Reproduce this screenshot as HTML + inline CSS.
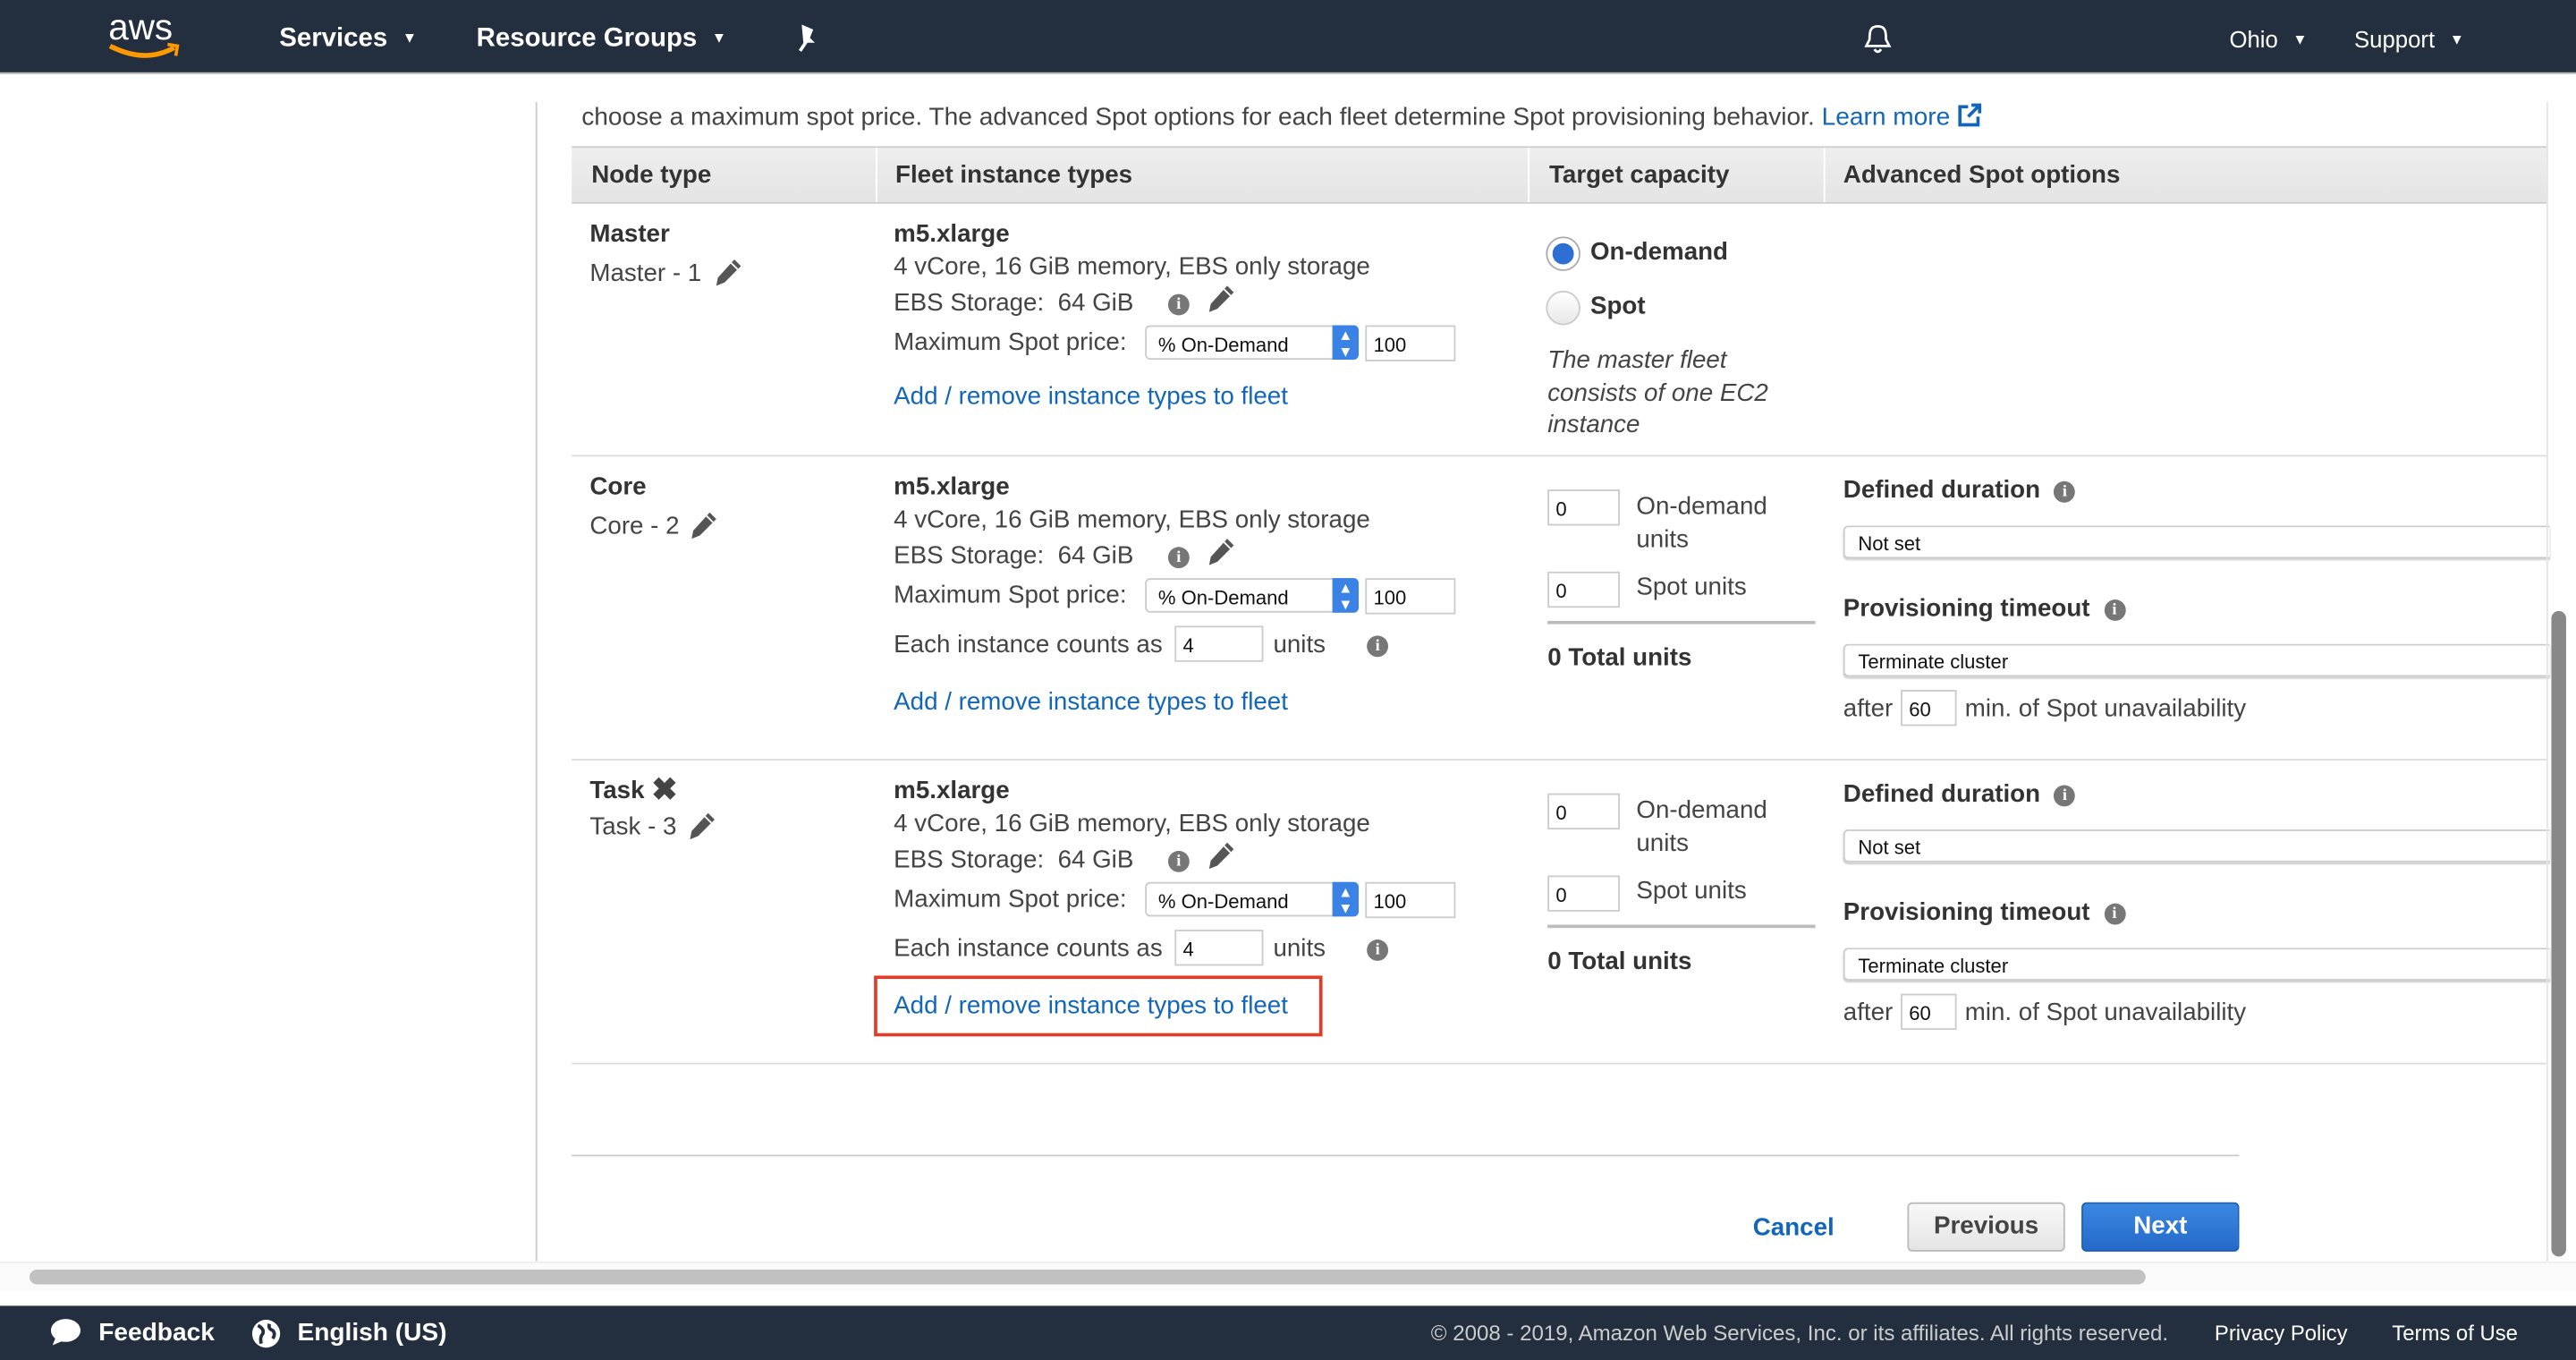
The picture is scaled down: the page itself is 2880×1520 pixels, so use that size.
<!DOCTYPE html>
<html><head><meta charset="utf-8"><style>
*{margin:0;padding:0;box-sizing:border-box}
html,body{width:2880px;height:1520px;overflow:hidden;background:#fff}
#w{position:absolute;left:0;top:0;width:1568px;height:828px;transform:scale(1.83673,1.83575);transform-origin:0 0;font-family:"Liberation Sans",sans-serif;color:#444;font-size:15.1px}
.a{position:absolute;white-space:nowrap}
.b{font-weight:bold;color:#333}
.l{color:#1166bb}
.top{position:absolute;left:0;top:0;width:1568px;height:45px;background:#232f3e;border-bottom:1px solid #bbb}
.top .a{color:#fff;font-weight:bold;font-size:16px;top:15px}
.car{font-size:9px;margin-left:9px;vertical-align:2px}
.hl{position:absolute;height:1px;background:#ddd}
.inp{position:absolute;border:1px solid #ccc;background:#fff;font-size:12px;color:#111;padding:4px 0 0 4px;height:22px}
.sel{position:absolute;border:1px solid #ccc;background:#fff;font-size:12px;color:#111;padding:4px 0 0 7px;height:21px;border-radius:3px;width:130px}
.sel i{position:absolute;right:-1px;top:-1px;width:16px;height:21px;background:#3b82e6;border-radius:0 3px 3px 0;color:#fff;font-style:normal;font-size:9px;text-align:center;line-height:10px;padding-top:1px}
.wide{position:absolute;left:1122px;width:430px;height:20px;border:1px solid #ccc;border-right:none;border-radius:3px 0 0 3px;font-size:12px;color:#111;padding:3px 0 0 8px;box-shadow:0 1px 1px #ccc}
.info{display:inline-block;width:13px;height:13px;border-radius:50%;background:#777;color:#fff;font-size:10px;font-weight:bold;text-align:center;line-height:13px;font-family:"Liberation Serif",serif;vertical-align:1px}
.pen{position:absolute}
</style></head><body><div id="w">
<svg width="0" height="0" style="position:absolute"><defs><g id="pen"><path d="M12 1 L16 5 L6 15 L1 17 L2 12 Z" fill="#555"/><path d="M10 3 L14 7" stroke="#fff" stroke-width="1"/></g></defs></svg>
<div class="top">
<div class="a" style="left:66px;top:4px;font-size:22px;font-weight:normal;color:#fff">aws</div>
<svg class="a" style="left:64px;top:25px" width="48" height="12"><path d="M3 3 Q24 14 42 4" stroke="#f90" stroke-width="3" fill="none"/><path d="M38 2 L44 3 L43 9" stroke="#f90" stroke-width="2" fill="none"/></svg>
<div class="a" style="left:170px">Services<span class="car">▼</span></div>
<div class="a" style="left:290px">Resource Groups<span class="car">▼</span></div>
<svg class="a" style="left:483px;top:14px" width="16" height="18"><path d="M5 1 L12 4 L10 9 L13 12 L6 12 Z" fill="#fff"/><path d="M8 11 L4 17" stroke="#fff" stroke-width="2"/></svg>
<svg class="a" style="left:1134px;top:14px" width="18" height="19"><path d="M9 2 C4 2 4 6 4 10 L2 14 L16 14 L14 10 C14 6 14 2 9 2Z M7 16 Q9 19 11 16" stroke="#fff" stroke-width="1.5" fill="none"/></svg>
<div class="a" style="left:1357px;font-weight:normal;font-size:14px;top:16px">Ohio<span class="car">▼</span></div>
<div class="a" style="left:1433px;font-weight:normal;font-size:14px;top:16px">Support<span class="car">▼</span></div>
</div>
<div style="position:absolute;left:326px;top:62px;width:1px;height:706px;background:#ccc"></div>
<div class="a" style="left:354px;top:62px;font-size:15.3px">choose a maximum spot price. The advanced Spot options for each fleet determine Spot provisioning behavior. <span class="l">Learn more</span> <svg width="16" height="16" style="vertical-align:-2px"><path d="M7 3 H2 V14 H13 V9" stroke="#1166bb" stroke-width="2" fill="none"/><path d="M9 2 H14 V7 M14 2 L7 9" stroke="#1166bb" stroke-width="2" fill="none"/></svg></div>
<div style="position:absolute;left:348px;top:89px;width:1202px;height:35px;background:linear-gradient(#eee,#e4e4e4);border-top:1px solid #ccc;border-bottom:1px solid #ccc"></div>
<div style="position:absolute;left:533px;top:90px;width:1px;height:33px;background:#fff"></div>
<div style="position:absolute;left:930px;top:90px;width:1px;height:33px;background:#fff"></div>
<div style="position:absolute;left:1110px;top:90px;width:1px;height:33px;background:#fff"></div>
<div class="a b" style="left:360px;top:98px">Node type</div>
<div class="a b" style="left:545px;top:98px">Fleet instance types</div>
<div class="a b" style="left:943px;top:98px">Target capacity</div>
<div class="a b" style="left:1122px;top:98px">Advanced Spot options</div>

<!-- pencils -->
<svg class="pen" style="left:435px;top:157px" width="18" height="18"><use href="#pen"/></svg>
<svg class="pen" style="left:735px;top:173px" width="18" height="18"><use href="#pen"/></svg>
<svg class="pen" style="left:420px;top:311px" width="18" height="18"><use href="#pen"/></svg>
<svg class="pen" style="left:735px;top:327px" width="18" height="18"><use href="#pen"/></svg>
<svg class="pen" style="left:419px;top:494px" width="18" height="18"><use href="#pen"/></svg>
<svg class="pen" style="left:735px;top:512px" width="18" height="18"><use href="#pen"/></svg>

<!-- Master -->
<div class="a b" style="left:359px;top:134px">Master</div>
<div class="a" style="left:359px;top:158px">Master - 1</div>
<div class="a b" style="left:544px;top:134px">m5.xlarge</div>
<div class="a" style="left:544px;top:154px">4 vCore, 16 GiB memory, EBS only storage</div>
<div class="a" style="left:544px;top:176px">EBS Storage:&nbsp; 64 GiB &nbsp;&nbsp;&nbsp;&nbsp;<span class="info">i</span></div>
<div class="a" style="left:544px;top:200px">Maximum Spot price:</div>
<div class="sel" style="left:697px;top:198px">% On-Demand<i>▲<br>▼</i></div>
<div class="inp" style="left:831px;top:198px;width:55px">100</div>
<div class="a l" style="left:544px;top:233px">Add / remove instance types to fleet</div>
<div class="a" style="left:941px;top:144px;width:21px;height:21px;border-radius:50%;border:1px solid #aaa;background:#fff"><div style="margin:3px;width:13px;height:13px;border-radius:50%;background:#2e6fd4"></div></div>
<div class="a b" style="left:968px;top:145px">On-demand</div>
<div class="a" style="left:941px;top:177px;width:21px;height:21px;border-radius:50%;border:1px solid #ccc;background:linear-gradient(#fff,#e8e8e8)"></div>
<div class="a b" style="left:968px;top:178px">Spot</div>
<div class="a" style="left:942px;top:210px;font-style:italic;line-height:19.5px">The master fleet<br>consists of one EC2<br>instance</div>
<div class="hl" style="left:348px;top:277px;width:1202px"></div>

<!-- Core -->
<div class="a b" style="left:359px;top:288px">Core</div>
<div class="a" style="left:359px;top:312px">Core - 2</div>
<div class="a b" style="left:544px;top:288px">m5.xlarge</div>
<div class="a" style="left:544px;top:308px">4 vCore, 16 GiB memory, EBS only storage</div>
<div class="a" style="left:544px;top:330px">EBS Storage:&nbsp; 64 GiB &nbsp;&nbsp;&nbsp;&nbsp;<span class="info">i</span></div>
<div class="a" style="left:544px;top:354px">Maximum Spot price:</div>
<div class="sel" style="left:697px;top:352px">% On-Demand<i>▲<br>▼</i></div>
<div class="inp" style="left:831px;top:352px;width:55px">100</div>
<div class="a" style="left:544px;top:384px">Each instance counts as</div>
<div class="inp" style="left:715px;top:381px;width:54px">4</div>
<div class="a" style="left:775px;top:384px">units &nbsp;&nbsp;&nbsp;&nbsp;&nbsp;<span class="info">i</span></div>
<div class="a l" style="left:544px;top:419px">Add / remove instance types to fleet</div>
<div class="inp" style="left:942px;top:298px;width:44px">0</div>
<div class="a" style="left:996px;top:299px;line-height:20px">On-demand<br>units</div>
<div class="inp" style="left:942px;top:348px;width:44px">0</div>
<div class="a" style="left:996px;top:349px">Spot units</div>
<div class="hl" style="left:942px;top:378px;width:163px;background:#bbb;height:1.5px"></div>
<div class="a b" style="left:942px;top:392px">0 Total units</div>
<div class="a b" style="left:1122px;top:290px">Defined duration &nbsp;<span class="info">i</span></div>
<div class="wide" style="top:320px">Not set</div>
<div class="a b" style="left:1122px;top:362px">Provisioning timeout &nbsp;<span class="info">i</span></div>
<div class="wide" style="top:392px">Terminate cluster</div>
<div class="a" style="left:1122px;top:423px">after</div>
<div class="inp" style="left:1157px;top:420px;width:34px">60</div>
<div class="a" style="left:1196px;top:423px">min. of Spot unavailability</div>
<div class="hl" style="left:348px;top:462px;width:1202px"></div>

<!-- Task -->
<div class="a b" style="left:359px;top:473px">Task <span style="font-size:19px;color:#444;vertical-align:-1px;line-height:15px">✖</span></div>
<div class="a" style="left:359px;top:495px">Task - 3</div>
<div class="a b" style="left:544px;top:473px">m5.xlarge</div>
<div class="a" style="left:544px;top:493px">4 vCore, 16 GiB memory, EBS only storage</div>
<div class="a" style="left:544px;top:515px">EBS Storage:&nbsp; 64 GiB &nbsp;&nbsp;&nbsp;&nbsp;<span class="info">i</span></div>
<div class="a" style="left:544px;top:539px">Maximum Spot price:</div>
<div class="sel" style="left:697px;top:537px">% On-Demand<i>▲<br>▼</i></div>
<div class="inp" style="left:831px;top:537px;width:55px">100</div>
<div class="a" style="left:544px;top:569px">Each instance counts as</div>
<div class="inp" style="left:715px;top:566px;width:54px">4</div>
<div class="a" style="left:775px;top:569px">units &nbsp;&nbsp;&nbsp;&nbsp;&nbsp;<span class="info">i</span></div>
<div class="a l" style="left:544px;top:604px">Add / remove instance types to fleet</div>
<div style="position:absolute;left:532px;top:594px;width:273px;height:37px;border:2px solid #e03c2a"></div>
<div class="inp" style="left:942px;top:483px;width:44px">0</div>
<div class="a" style="left:996px;top:484px;line-height:20px">On-demand<br>units</div>
<div class="inp" style="left:942px;top:533px;width:44px">0</div>
<div class="a" style="left:996px;top:534px">Spot units</div>
<div class="hl" style="left:942px;top:563px;width:163px;background:#bbb;height:1.5px"></div>
<div class="a b" style="left:942px;top:577px">0 Total units</div>
<div class="a b" style="left:1122px;top:475px">Defined duration &nbsp;<span class="info">i</span></div>
<div class="wide" style="top:505px">Not set</div>
<div class="a b" style="left:1122px;top:547px">Provisioning timeout &nbsp;<span class="info">i</span></div>
<div class="wide" style="top:577px">Terminate cluster</div>
<div class="a" style="left:1122px;top:608px">after</div>
<div class="inp" style="left:1157px;top:605px;width:34px">60</div>
<div class="a" style="left:1196px;top:608px">min. of Spot unavailability</div>
<div class="hl" style="left:348px;top:647px;width:1202px"></div>

<div class="hl" style="left:348px;top:703px;width:1015px;background:#ccc"></div>
<div class="a b l" style="left:1067px;top:739px;color:#1166bb">Cancel</div>
<div class="a b" style="left:1161px;top:732px;width:96px;height:30px;border:1px solid #bbb;border-radius:3px;background:linear-gradient(#f8f8f8,#e4e4e4);text-align:center;line-height:28px;color:#444">Previous</div>
<div class="a b" style="left:1267px;top:732px;width:96px;height:30px;border:1px solid #1a5fb4;border-radius:3px;background:linear-gradient(#3b88e0,#2569c9);text-align:center;line-height:28px;color:#fff">Next</div>

<div style="position:absolute;left:1553px;top:372px;width:9px;height:393px;border-radius:5px;background:#888"></div>
<div style="position:absolute;left:1550px;top:62px;width:1px;height:706px;background:#e4e4e4"></div>
<div style="position:absolute;left:0;top:768px;width:1568px;height:18px;background:#fafafa;border-top:1px solid #eee"></div>
<div style="position:absolute;left:18px;top:773px;width:1288px;height:9px;border-radius:5px;background:#c1c1c1"></div>

<div style="position:absolute;left:0;top:795px;width:1568px;height:33px;background:#232f3e"></div>
<svg class="a" style="left:30px;top:802px" width="20" height="18"><ellipse cx="10" cy="8" rx="9" ry="7" fill="#fff"/><path d="M4 12 L2 17 L9 14Z" fill="#fff"/></svg>
<div class="a b" style="left:60px;top:803px;color:#fff;font-size:15.3px">Feedback</div>
<svg class="a" style="left:153px;top:803px" width="18" height="18"><circle cx="9" cy="9" r="8.5" fill="#fff"/><path d="M4 4 Q8 6 7 9 Q5 11 6 15 M11 3 Q10 6 13 7 Q15 9 13 12" stroke="#232f3e" stroke-width="2" fill="none"/></svg>
<div class="a b" style="left:181px;top:803px;color:#fff;font-size:15.3px">English (US)</div>
<div class="a" style="left:871px;top:804px;color:#ccc;font-size:13.1px">© 2008 - 2019, Amazon Web Services, Inc. or its affiliates. All rights reserved.</div>
<div class="a" style="left:1348px;top:804px;color:#fff;font-size:13px">Privacy Policy</div>
<div class="a" style="left:1456px;top:804px;color:#fff;font-size:13px">Terms of Use</div>
</div></body></html>
